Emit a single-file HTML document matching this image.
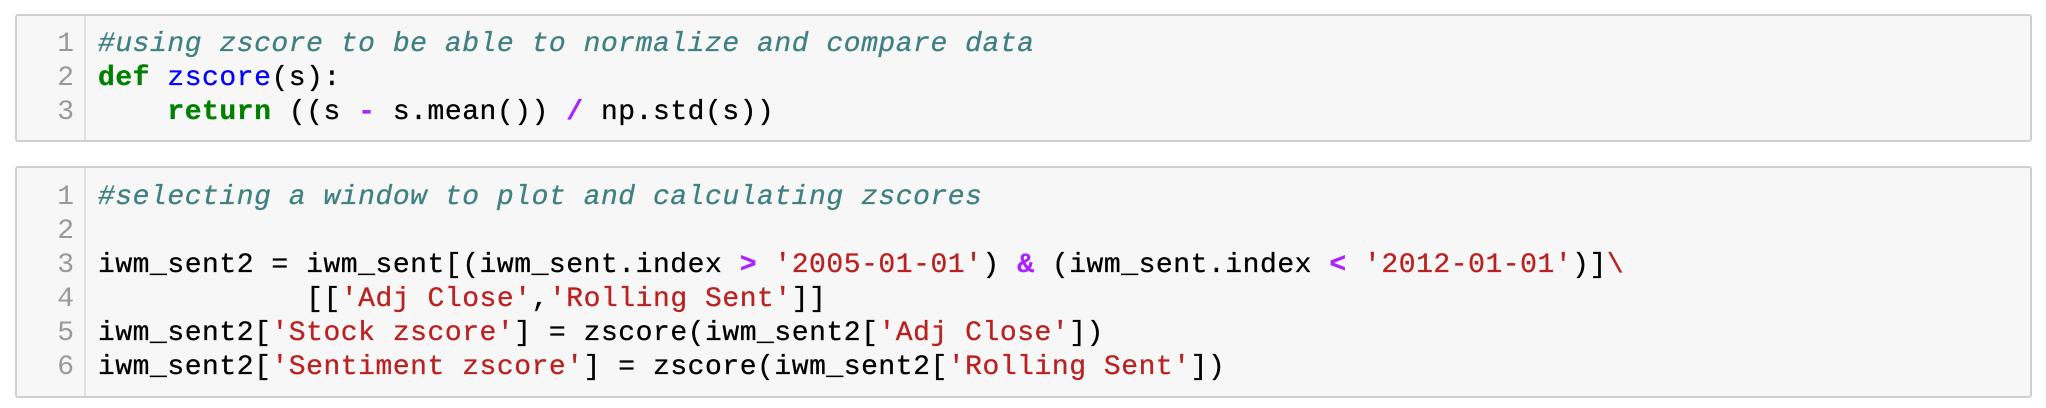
<!DOCTYPE html>
<html><head><style>
body{margin:0;background:#fff;width:2046px;height:408px;overflow:hidden}
.cell{position:absolute;left:15px;width:2017px;background:#f7f7f7;border:2px solid #cfcfcf;border-radius:3px;box-sizing:border-box}
.gut{position:absolute;left:0;top:0;bottom:0;width:67px;border-right:2px solid #e0e0e0;background:#f7f7f7}
.ln{position:absolute;right:10px;color:#999;font:28px/34px "Liberation Mono",monospace;text-align:right}
.code{position:absolute;left:81px;font:28px/34px "Liberation Mono",monospace;letter-spacing:0.54px;white-space:pre;color:#000;-webkit-text-stroke:0.3px currentColor}
.c{color:#408080;font-style:italic}.k{color:#008000;font-weight:bold}.f{color:#0000ff}.o{color:#aa22ff;font-weight:bold}.s{color:#ba2121}
</style></head><body>
<div class="cell" style="top:14px;height:128px">
<div class="gut"><div class="ln" style="top:12px">1<br>2<br>3</div></div>
<div class="code" style="top:12px"><span class="c">#using zscore to be able to normalize and compare data</span>
<span class="k">def</span> <span class="f">zscore</span>(s):
    <span class="k">return</span> ((s <span class="o">-</span> s.mean()) <span class="o">/</span> np.std(s))</div>
</div>
<div class="cell" style="top:166px;height:232px">
<div class="gut"><div class="ln" style="top:13px">1<br>2<br>3<br>4<br>5<br>6</div></div>
<div class="code" style="top:13px"><span class="c">#selecting a window to plot and calculating zscores</span>

iwm_sent2 = iwm_sent[(iwm_sent.index <span class="o">&gt;</span> <span class="s">'2005-01-01'</span>) <span class="o">&amp;</span> (iwm_sent.index <span class="o">&lt;</span> <span class="s">'2012-01-01'</span>)]<span class="s">\</span>
            [[<span class="s">'Adj Close'</span>,<span class="s">'Rolling Sent'</span>]]
iwm_sent2[<span class="s">'Stock zscore'</span>] = zscore(iwm_sent2[<span class="s">'Adj Close'</span>])
iwm_sent2[<span class="s">'Sentiment zscore'</span>] = zscore(iwm_sent2[<span class="s">'Rolling Sent'</span>])</div>
</div>
</body></html>
